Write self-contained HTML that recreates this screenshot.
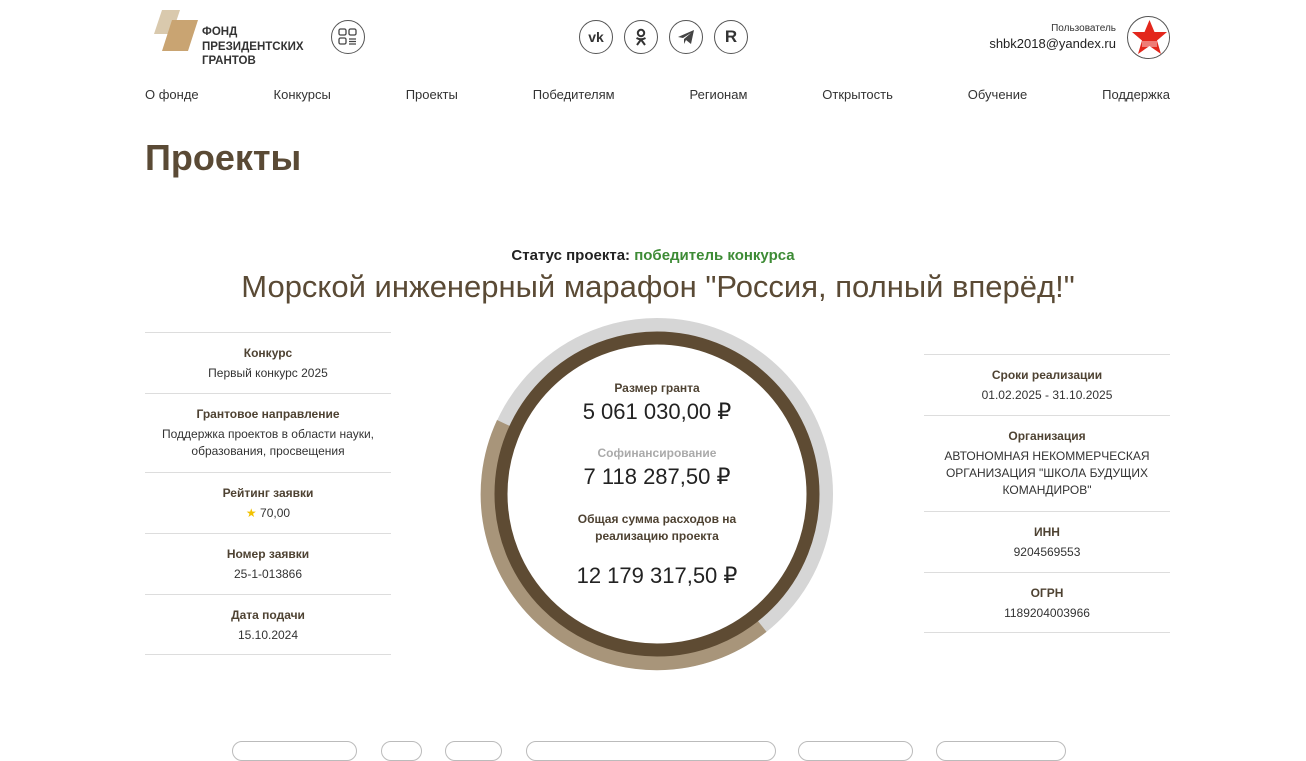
<!DOCTYPE html>
<html><head><meta charset="utf-8"><style>
*{margin:0;padding:0;box-sizing:border-box}
body{width:1306px;height:745px;overflow:hidden;background:#fff;font-family:"Liberation Sans","DejaVu Sans",sans-serif;color:#222;position:relative}
.a{position:absolute}
.nav{position:absolute;top:87px;left:145px;width:1025px;display:flex;justify-content:space-between;font-size:13px;color:#333}
.col{position:absolute;width:246px;text-align:center;font-size:12px;color:#333;line-height:17px}
.item{border-top:1px solid #ddd;padding:12px 6px 0;}
.item b{display:block;font-size:12px;color:#4e4232;margin-bottom:3px}
.soc{position:absolute;top:20px;width:34px;height:34px;border:1px solid #555;border-radius:50%;display:flex;align-items:center;justify-content:center;font-weight:bold;font-size:14px;color:#333}
.btn{position:absolute;top:741px;height:20px;border:1px solid #bbb;border-radius:10px}
.ct{position:absolute;left:457px;width:400px;text-align:center}
</style></head><body>
<svg class="a" style="left:152px;top:10px" width="50" height="42"><polygon points="10,0 28,0 20,24 2,24" fill="#d9c9ad"/><polygon points="20,10 46,10 36,41 10,41" fill="#c9a472"/></svg>
<div class="a" style="left:202px;top:25px;font-size:11.5px;font-weight:bold;line-height:14.5px;color:#333">ФОНД<br>ПРЕЗИДЕНТСКИХ<br>ГРАНТОВ</div>
<div class="a" style="left:331px;top:20px;width:34px;height:34px;border:1px solid #555;border-radius:50%"></div>
<svg class="a" style="left:338px;top:28px" width="20" height="18"><rect x="1" y="1" width="7" height="6" rx="1.5" fill="none" stroke="#444" stroke-width="1.3"/><rect x="11" y="1" width="7" height="6" rx="1.5" fill="none" stroke="#444" stroke-width="1.3"/><rect x="1" y="10" width="7" height="6" rx="1.5" fill="none" stroke="#444" stroke-width="1.3"/><path d="M11 11h7M11 13.5h7M11 16h7" stroke="#444" stroke-width="1.2"/></svg>
<div class="soc" style="left:579px">vk</div>
<div class="soc" style="left:624px"><svg width="14" height="18"><circle cx="7" cy="5" r="3.2" fill="none" stroke="#333" stroke-width="2"/><path d="M2.5 10 Q7 12.5 11.5 10 M7 11.5 L3 17 M7 11.5 L11 17" fill="none" stroke="#333" stroke-width="2"/></svg></div>
<div class="soc" style="left:669px"><svg width="18" height="16"><path d="M1 8 L17 1 L14 15 L9 11 L7 15 L7 10 L14 4 L6 9 Z" fill="#444"/></svg></div>
<div class="soc" style="left:714px;font-size:17px">R</div>
<div class="a" style="left:1000px;top:23px;width:116px;text-align:right;font-size:10px;color:#333">Пользователь</div>
<div class="a" style="left:960px;top:36px;width:156px;text-align:right;font-size:13px;color:#222">shbk2018@yandex.ru</div>
<div class="a" style="left:1127px;top:16px;width:43px;height:43px;border:1px solid #555;border-radius:50%;overflow:hidden"><svg width="43" height="43"><circle cx="21.5" cy="21.5" r="20" fill="#fff"/><polygon points="21.5,3 26.5,15 39,15 29,23.5 33,37 21.5,29 10,37 14,23.5 4,15 16.5,15" fill="#e3271c"/><rect x="14" y="24" width="15" height="6" fill="#fff" opacity=".4"/></svg></div>
<div class="nav"><span>О фонде</span><span>Конкурсы</span><span>Проекты</span><span>Победителям</span><span>Регионам</span><span>Открытость</span><span>Обучение</span><span>Поддержка</span></div>
<div class="a" style="left:145px;top:137px;font-size:36px;font-weight:bold;color:#5a4a35">Проекты</div>
<div class="a" style="left:0;width:1306px;top:247px;text-align:center;font-size:15px;font-weight:bold;color:#222">Статус проекта: <span style="color:#3d8b35">победитель конкурса</span></div>
<div class="a" style="left:0;width:1316px;top:269px;text-align:center;font-size:31px;color:#5a4a35">Морской инженерный марафон "Россия, полный вперёд!"</div>
<div class="col" style="left:145px;top:332px">
<div class="item" style="height:61px"><b>Конкурс</b>Первый конкурс 2025</div>
<div class="item" style="height:79px"><b>Грантовое направление</b>Поддержка проектов в области науки, образования, просвещения</div>
<div class="item" style="height:61px"><b>Рейтинг заявки</b><span style="color:#f2c200">★</span> 70,00</div>
<div class="item" style="height:61px"><b>Номер заявки</b>25-1-013866</div>
<div class="item" style="height:61px;border-bottom:1px solid #ddd"><b>Дата подачи</b>15.10.2024</div>
</div>
<div class="col" style="left:924px;top:354px">
<div class="item" style="height:61px"><b>Сроки реализации</b>01.02.2025 - 31.10.2025</div>
<div class="item" style="height:96px"><b>Организация</b>АВТОНОМНАЯ НЕКОММЕРЧЕСКАЯ ОРГАНИЗАЦИЯ "ШКОЛА БУДУЩИХ КОМАНДИРОВ"</div>
<div class="item" style="height:61px"><b>ИНН</b>9204569553</div>
<div class="item" style="height:61px;border-bottom:1px solid #ddd"><b>ОГРН</b>1189204003966</div>
</div>
<svg class="a" style="left:0;top:0" width="1306" height="745">
<circle cx="657" cy="494" r="168" fill="none" stroke="#d6d6d6" stroke-width="16"/>
<path d="M504.3 423.4 A168 168 0 0 0 761.5 625.5" fill="none" stroke="#a8957a" stroke-width="16"/>
<circle cx="657" cy="494" r="156" fill="#fff" stroke="#5e4b33" stroke-width="13"/>
</svg>
<div class="ct" style="top:381px;font-size:12px;font-weight:bold;color:#4e4232">Размер гранта</div>
<div class="ct" style="top:399px;font-size:22px;color:#222">5 061 030,00 ₽</div>
<div class="ct" style="top:446px;font-size:12px;font-weight:bold;color:#aaa">Софинансирование</div>
<div class="ct" style="top:464px;font-size:22px;color:#222">7 118 287,50 ₽</div>
<div class="ct" style="top:511px;font-size:12px;font-weight:bold;color:#4e4232;line-height:17px">Общая сумма расходов на<br>реализацию проекта</div>
<div class="ct" style="top:563px;font-size:22px;color:#222">12 179 317,50 ₽</div>
<div class="btn" style="left:232px;width:125px"></div>
<div class="btn" style="left:381px;width:41px"></div>
<div class="btn" style="left:445px;width:57px"></div>
<div class="btn" style="left:526px;width:250px"></div>
<div class="btn" style="left:798px;width:115px"></div>
<div class="btn" style="left:936px;width:130px"></div>
</body></html>
